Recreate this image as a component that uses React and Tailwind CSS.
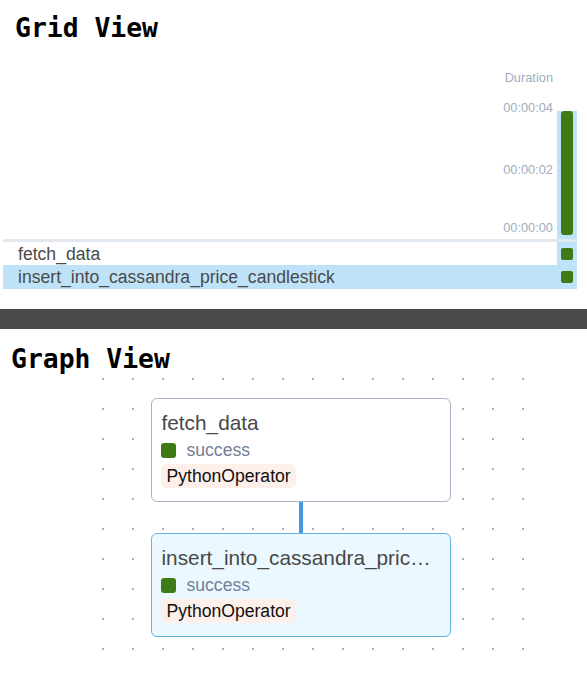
const tasks = [
    { id: 1, name: 'fetch_data', selected: false },
    { id: 2, name: 'insert_into_cassandra_price_candlestick', selected: true },
];

const sans = "font-['Liberation_Sans',Arial,sans-serif]";
const mono = "font-['DejaVu_Sans_Mono',monospace]";

const TaskNode = ({ name, selected, className }) => (
    <div
        className={`absolute left-[63.2px] w-[300px] h-[104px] rounded-[6px] border pt-[12px] px-[9px] ${
            selected ? 'bg-[#ebf8ff] border-[#63b3ed]' : 'bg-white border-[#a9b6c6]'
        } ${className}`}
    >
        <div className="truncate text-[20.8px] leading-[24px] text-[#484848]">{name}</div>
        <div className="mt-[5px] flex h-[20px] items-center">
            <span className="h-[15px] w-[15px] rounded-[3px] bg-[#3d7b17]" />
            <span className="ml-[10px] text-[17.6px] leading-[20px] text-[#718096]">success</span>
        </div>
        <div className="mt-[4px] inline-block rounded-[5px] bg-[#fdefe9] px-[5px] text-[17.6px] leading-[24px] text-[#111]">
            PythonOperator
        </div>
    </div>
);

export default function App() {
    return (
        <div className={`w-[587px] h-[700px] bg-white overflow-hidden ${sans}`}>
            {/* --- Grid View --- */}
            <div className="h-[309px] pt-[13px]">
                <h1 className={`${mono} pl-[15px] text-[26.4px] leading-[30px] font-bold text-black`}>Grid View</h1>
                <div className="ml-[3px] w-[574px]">
                    <div className="mt-[27px] flex justify-end pr-[24px] text-[12.8px] leading-[16px] text-[#a0aec0]">
                        Duration
                    </div>
                    <div className="mt-[14px] flex justify-end items-start">
                        <div className="flex flex-col text-right text-[12.8px] leading-[16px] text-[#a0aec0]">
                            <span>00:00:04</span>
                            <span className="mt-[46px]">00:00:02</span>
                            <span className="mt-[42px]">00:00:00</span>
                        </div>
                        <div className="ml-[4px] mt-[11px] h-[128px] w-[20px] bg-[#bee3f8] px-[4px] pb-[4px]">
                            <div className="h-full w-full rounded-[3px] bg-[#3d7b17]" />
                        </div>
                    </div>
                    <div className="h-[3px] bg-[#e2e8f0]" />
                    {tasks.map((task) => (
                        <div
                            key={task.id}
                            className={`flex items-center ${task.selected ? 'h-[24px] bg-[#bee3f8]' : 'h-[23px] bg-white'}`}
                        >
                            <span className="flex-1 pl-[15px] text-[17.6px] leading-[20px] text-[#4a4a4a]">{task.name}</span>
                            <div className="flex h-full w-[20px] items-center justify-center bg-[#bee3f8]">
                                <span className="h-[12px] w-[12px] rounded-[2px] bg-[#3d7b17]" />
                            </div>
                        </div>
                    ))}
                </div>
            </div>

            <div className="h-[20px] bg-[#4b4a4b]" />

            {/* --- Graph View --- */}
            <div className="pt-[15px]">
                <h1 className={`${mono} pl-[11px] text-[26.4px] leading-[30px] font-bold text-black`}>Graph View</h1>
                <div className="relative ml-[88.3px] mt-[-10px] h-[300px] w-[450px] bg-[radial-gradient(circle,#b0b0b0_0.9px,transparent_1px)] bg-[size:30px_30px]">
                    <TaskNode name="fetch_data" className="top-[34px]" />
                    <div className="absolute left-[210.7px] top-[138px] h-[31px] w-[4px] bg-[#4299e1]" />
                    <TaskNode name="insert_into_cassandra_price_candlestick" selected className="top-[169px]" />
                </div>
            </div>
        </div>
    );
}
